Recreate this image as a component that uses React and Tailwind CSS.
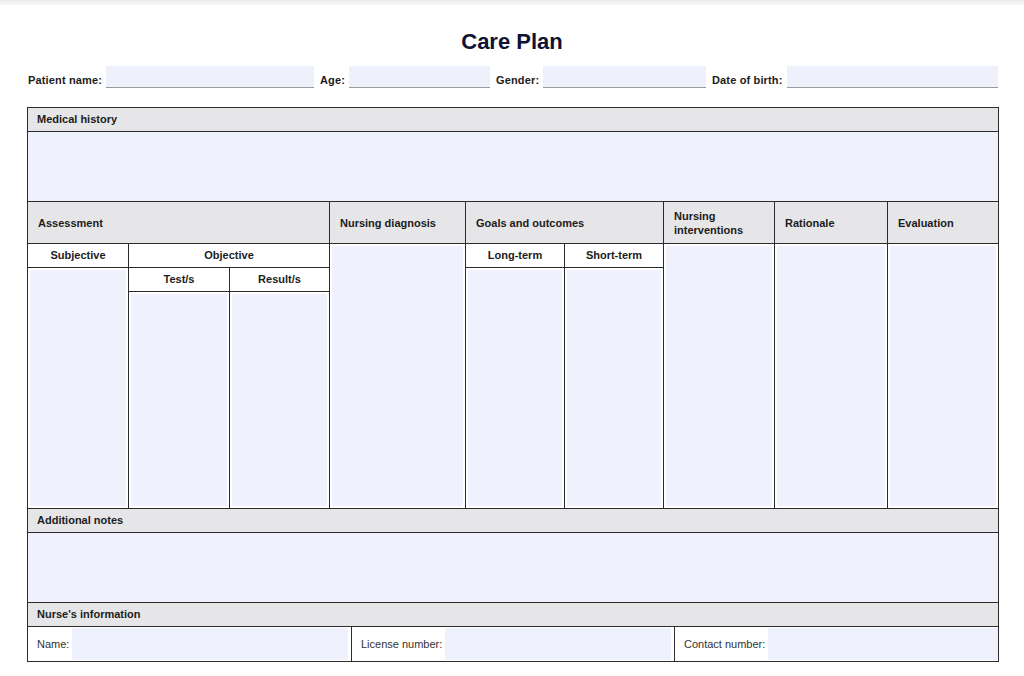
import React from 'react';

// Care plan form — table laid out on a 9 column grid, 1px dark gaps act as the rules
const font = { fontFamily: '"Liberation Sans", Arial, Helvetica, sans-serif' };

const HeaderField = ({ label, labelWidth, width, first }) => (
  <div className={`flex items-end ${first ? '' : 'ml-[6px]'}`}>
    <span className={`text-[11px] font-bold text-[#1c1c1c] leading-[14px] pb-[1px] tracking-[0.15px] ${labelWidth}`}>{label}</span>
    <div className={`h-[22px] bg-[#eef1fb] border-b border-[#9a9a9a] ${width}`}></div>
  </div>
);

const Body = ({ className }) => (
  <div className={`bg-white p-[2px] ${className}`}>
    <div className="w-full h-full bg-[#eff2fc]"></div>
  </div>
);

const GrayHead = ({ children, className }) => (
  <div className={`bg-[#e6e6e8] flex items-center pl-[10px] text-[11px] font-bold text-[#1c1c1c] leading-[14px] ${className}`}>
    {children}
  </div>
);

const SubHead = ({ children, className }) => (
  <div className={`bg-white flex items-center justify-center text-[11px] font-bold text-[#1c1c1c] ${className}`}>
    {children}
  </div>
);

const SectionBar = ({ children }) => (
  <div className="h-[24px] bg-[#e6e6e8] flex items-center pl-[9px] text-[11px] font-bold text-[#1c1c1c] border-t border-[#2b2b2b]">
    {children}
  </div>
);

const NurseCell = ({ label, fieldClass }) => (
  <div className="bg-white flex items-stretch">
    <span className="pl-[9px] pr-[3px] flex items-center text-[11px] text-[#333]">{label}</span>
    <div className={`my-[1px] bg-[#eff2fc] ${fieldClass}`}></div>
  </div>
);

const App = () => {
  return (
    <div className="w-[1024px] h-[676px] bg-white overflow-hidden" style={font}>
      <div className="h-[5px] bg-gradient-to-b from-[#ececec] to-[#f8f8f8]"></div>

      {/* Title */}
      <h1 className="mt-[24px] text-center text-[22px] leading-[26px] font-bold text-[#0e1233]">Care Plan</h1>

      {/* Patient details */}
      <div className="mt-[11px] pl-[28px] flex items-end">
        <HeaderField label="Patient name:" labelWidth="w-[78px]" width="w-[208px]" first />
        <HeaderField label="Age:" labelWidth="w-[29px]" width="w-[141px]" />
        <HeaderField label="Gender:" labelWidth="w-[47px]" width="w-[163px]" />
        <HeaderField label="Date of birth:" labelWidth="w-[75px]" width="w-[211px]" />
      </div>

      {/* Form table */}
      <div className="mt-[19px] ml-[27px] w-[972px] border border-[#2b2b2b] border-t-0">
        <SectionBar>Medical history</SectionBar>
        <div className="h-[70px] border-t border-[#2b2b2b] bg-[#eff2fc]"></div>

        <div className="border-t border-[#2b2b2b] grid gap-px bg-[#2b2b2b] grid-cols-[100px_100px_99px_135px_98px_98px_110px_112px_110px] grid-rows-[41px_23px_23px_216px]">
          <GrayHead className="col-start-1 col-span-3 row-start-1">Assessment</GrayHead>
          <GrayHead className="col-start-4 row-start-1">Nursing diagnosis</GrayHead>
          <GrayHead className="col-start-5 col-span-2 row-start-1">Goals and outcomes</GrayHead>
          <GrayHead className="col-start-7 row-start-1">Nursing<br />interventions</GrayHead>
          <GrayHead className="col-start-8 row-start-1">Rationale</GrayHead>
          <GrayHead className="col-start-9 row-start-1">Evaluation</GrayHead>

          <SubHead className="col-start-1 row-start-2">Subjective</SubHead>
          <SubHead className="col-start-2 col-span-2 row-start-2">Objective</SubHead>
          <SubHead className="col-start-2 row-start-3">Test/s</SubHead>
          <SubHead className="col-start-3 row-start-3">Result/s</SubHead>
          <SubHead className="col-start-5 row-start-2">Long-term</SubHead>
          <SubHead className="col-start-6 row-start-2">Short-term</SubHead>

          <Body className="col-start-1 row-start-3 row-span-2" />
          <Body className="col-start-2 row-start-4" />
          <Body className="col-start-3 row-start-4" />
          <Body className="col-start-4 row-start-2 row-span-3" />
          <Body className="col-start-5 row-start-3 row-span-2" />
          <Body className="col-start-6 row-start-3 row-span-2" />
          <Body className="col-start-7 row-start-2 row-span-3" />
          <Body className="col-start-8 row-start-2 row-span-3" />
          <Body className="col-start-9 row-start-2 row-span-3" />
        </div>

        <SectionBar>Additional notes</SectionBar>
        <div className="h-[70px] border-t border-[#2b2b2b] bg-[#eff2fc]"></div>

        <SectionBar>Nurse's information</SectionBar>
        <div className="border-t border-[#2b2b2b] grid gap-px bg-[#2b2b2b] grid-cols-[323px_322px_323px] h-[35px]">
          <NurseCell label="Name:" fieldClass="flex-1 mr-[3px]" />
          <NurseCell label="License number:" fieldClass="flex-1 mr-[3px]" />
          <NurseCell label="Contact number:" fieldClass="flex-1" />
        </div>
      </div>
    </div>
  );
};

export default App;
